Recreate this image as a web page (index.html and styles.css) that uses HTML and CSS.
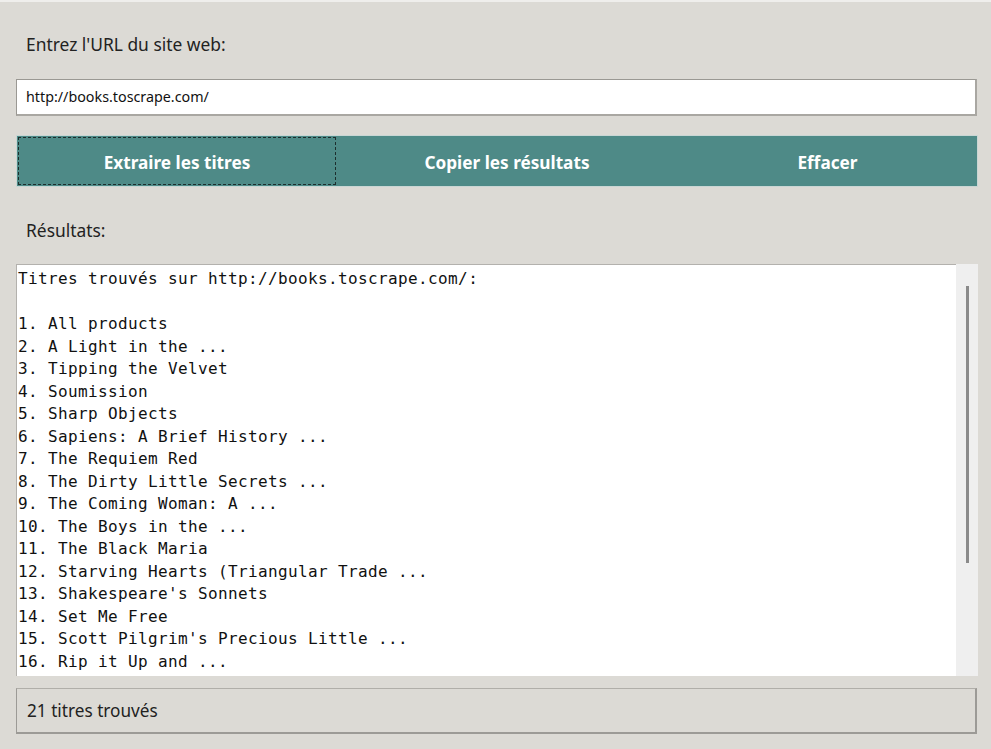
FILE: index.html
```html
<!DOCTYPE html>
<html lang="fr">
<head>
<meta charset="utf-8">
<title>Extracteur de titres</title>
<link rel="stylesheet" href="styles.css">
</head>
<body>
<div class="app">
  <div class="label label-url">Entrez l'URL du site web:</div>
  <div class="url-input">http://books.toscrape.com/</div>
  <div class="buttons">
    <div class="btn btn-extract"><span class="focus">Extraire les titres</span></div>
    <div class="btn btn-copy">Copier les résultats</div>
    <div class="btn btn-clear">Effacer</div>
  </div>
  <div class="label label-results">Résultats:</div>
  <div class="results">
    <pre class="text">Titres trouvés sur http://books.toscrape.com/:

1. All products
2. A Light in the ...
3. Tipping the Velvet
4. Soumission
5. Sharp Objects
6. Sapiens: A Brief History ...
7. The Requiem Red
8. The Dirty Little Secrets ...
9. The Coming Woman: A ...
10. The Boys in the ...
11. The Black Maria
12. Starving Hearts (Triangular Trade ...
13. Shakespeare's Sonnets
14. Set Me Free
15. Scott Pilgrim's Precious Little ...
16. Rip it Up and ...</pre>
    <div class="scrollbar"><div class="thumb"></div></div>
  </div>
  <div class="status">21 titres trouvés</div>
</div>
</body>
</html>
```

FILE: styles.css
```css
html, body {
  margin: 0;
  padding: 0;
  background: #dcdad5;
}
.app {
  border-top: 2px solid #efeeec;
  padding: 0 13px 0 16px;
  font-family: "Noto Sans", "Open Sans", sans-serif;
  color: #222;
  display: flex;
  flex-direction: column;
  height: 747px;
  box-sizing: border-box;
}
.label {
  font-size: 17.4px;
  line-height: 22px;
  padding-left: 10px;
}
.label-url {
  margin-top: 31px;
  margin-bottom: 24px;
}
.url-input {
  height: 37px;
  box-sizing: border-box;
  background: #fff;
  border: 1px solid #a9a7a2;
  border-top-color: #9a9893;
  border-left-color: #9a9893;
  border-right-width: 2px;
  border-bottom-width: 2px;
  font-size: 14.3px;
  line-height: 34px;
  padding-left: 9px;
  margin-right: 1px;
  color: #111;
}
.buttons {
  margin-top: 19px;
  height: 52px;
  flex-shrink: 0;
  display: flex;
  background: #4e8a87;
  border: 1px solid #c9d6d4;
  box-sizing: border-box;
}
.btn {
  display: flex;
  align-items: center;
  justify-content: center;
  color: #fff;
  font-weight: 700;
  font-size: 17.2px;
  padding-top: 2px;
  box-sizing: border-box;
}
.btn-extract { width: 319px; padding: 1px 0 1px 1px; }
.btn-extract .focus {
  flex: 1;
  align-self: stretch;
  display: flex;
  align-items: center;
  justify-content: center;
  padding-top: 2px;
  border: 1px dashed #1d2e2d;
}
.btn-copy { width: 342px; }
.btn-clear { flex: 1; }
.label-results {
  margin-top: 32px;
  margin-bottom: 23px;
}
.results {
  height: 411px;
  flex-shrink: 0;
  display: flex;
  background: #fff;
  border-top: 1px solid #b3b1ad;
  border-left: 1px solid #b3b1ad;
}
.text {
  flex: 1;
  margin: 0;
  padding: 3px 0 0 1px;
  overflow: hidden;
  font-family: "DejaVu Sans Mono", monospace;
  font-size: 16px;
  letter-spacing: 0.37px;
  line-height: 22.5px;
  color: #111;
}
.scrollbar {
  width: 22px;
  background: #efefef;
  margin-top: -1px;
  position: relative;
}
.thumb {
  position: absolute;
  left: 10px;
  top: 22px;
  width: 3px;
  height: 277px;
  background: #8a8a8a;
}
.status {
  margin-top: 12px;
  height: 46px;
  flex-shrink: 0;
  box-sizing: border-box;
  border: 1px solid #9c9a96;
  border-top-color: #b0aea9;
  border-right-width: 2px;
  border-bottom-width: 2px;
  font-size: 17.2px;
  line-height: 43px;
  padding-left: 10px;
  margin-right: 1px;
}
```
